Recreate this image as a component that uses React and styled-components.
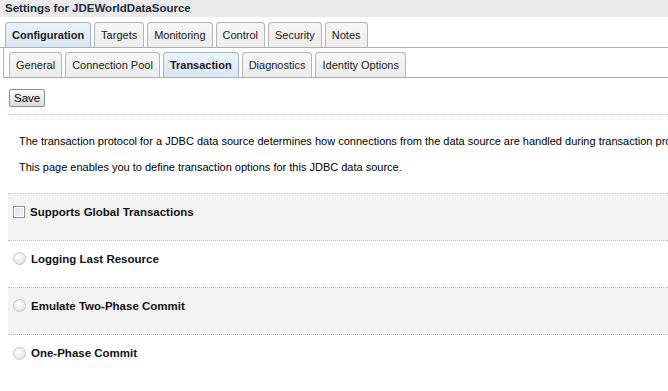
import styled, { createGlobalStyle } from "styled-components";

const GlobalStyle = createGlobalStyle`
  body {
    margin: 0;
    background: #ffffff;
    font-family: "Liberation Sans", Arial, sans-serif;
    font-size: 11px;
    color: #000000;
  }
`;

const topTabs = ["Configuration", "Targets", "Monitoring", "Control", "Security", "Notes"];
const subTabs = ["General", "Connection Pool", "Transaction", "Diagnostics", "Identity Options"];

const options = [
  { label: "Supports Global Transactions", type: "checkbox" },
  { label: "Logging Last Resource", type: "radio" },
  { label: "Emulate Two-Phase Commit", type: "radio" },
  { label: "One-Phase Commit", type: "radio" },
];

const App = () => (
  <Page>
    <GlobalStyle />
    <TitleBar>Settings for JDEWorldDataSource</TitleBar>

    <TabStrip>
      {topTabs.map(tab => (
        <Tab key={tab} selected={tab === "Configuration"}>
          {tab}
        </Tab>
      ))}
    </TabStrip>

    <Panel>
      <SubTabStrip>
        {subTabs.map(tab => (
          <Tab key={tab} selected={tab === "Transaction"}>
            {tab}
          </Tab>
        ))}
      </SubTabStrip>
    </Panel>

    <Toolbar>
      <SaveButton>Save</SaveButton>
    </Toolbar>

    <Intro>
      <p>
        The transaction protocol for a JDBC data source determines how connections from the data
        source are handled during transaction processing.
      </p>
      <p>This page enables you to define transaction options for this JDBC data source.</p>
    </Intro>

    <Options>
      {options.map((option, index) => (
        <OptionRow key={option.label} shaded={index % 2 === 0}>
          {option.type === "checkbox" ? <CheckBox /> : <Radio />}
          <OptionLabel>{option.label}</OptionLabel>
        </OptionRow>
      ))}
    </Options>
  </Page>
);

const Page = styled.div`
  width: 668px;
  height: 391px;
  overflow: hidden;
`;

const TitleBar = styled.div`
  height: 17px;
  line-height: 17px;
  padding-left: 5px;
  background: #eaeaea;
  font-size: 11.5px;
  font-weight: 700;
  color: #1e2b3c;
  white-space: nowrap;
`;

const TabStrip = styled.div`
  display: flex;
  gap: 3px;
  margin-top: 5px;
  padding-left: 5px;
  border-bottom: 1px solid #9db1ca;
`;

const Tab = styled.div`
  height: 24px;
  line-height: 24px;
  padding: 0 6px;
  border: 1px solid ${({ selected }) => (selected ? "#9ab3d1" : "#b4b4b4")};
  border-bottom: none;
  border-radius: 4px 4px 0 0;
  background: ${({ selected }) =>
    selected ? "linear-gradient(#edf3fa, #d9e6f4)" : "linear-gradient(#f6f6f6, #ececec)"};
  font-size: 11px;
  font-weight: ${({ selected }) => (selected ? 700 : 400)};
  color: #1a1a1a;
  white-space: nowrap;
`;

const Panel = styled.div`
  margin-left: 3px;
  border-left: 1px solid #9db1ca;
`;

const SubTabStrip = styled.div`
  display: flex;
  gap: 3px;
  padding: 4px 0 0 5px;
  border-bottom: 1px solid #9db1ca;
`;

const Toolbar = styled.div`
  margin-left: 8px;
  padding: 11px 0 7px 1px;
  border-bottom: 1px dotted #c4bcc4;
  line-height: 0;
`;

const SaveButton = styled.button`
  height: 18px;
  padding: 0 4px;
  border: 1px solid #8c8c8c;
  border-radius: 2px;
  background: linear-gradient(#fbfbfb, #dcdcdc);
  font-family: "Liberation Sans", Arial, sans-serif;
  font-size: 11.5px;
  line-height: 14px;
  color: #000000;
`;

const Intro = styled.div`
  padding: 19px 0 19px 19px;
  white-space: nowrap;

  p {
    margin: 0;
    line-height: 14px;
  }

  p + p {
    margin-top: 12px;
  }
`;

const Options = styled.div`
  margin-left: 8px;
  border-top: 1px dotted #c4bcc4;
`;

const OptionRow = styled.div`
  display: flex;
  align-items: center;
  gap: 5px;
  height: 47px;
  padding: 0 0 11px 5px;
  box-sizing: border-box;
  background: ${({ shaded }) => (shaded ? "#f3f3f3" : "#ffffff")};
  border-bottom: 1px dotted #c4bcc4;

  &:last-child {
    border-bottom: none;
  }
`;

const CheckBox = styled.span`
  width: 10px;
  height: 10px;
  border: 1px solid #8c97a6;
  background: linear-gradient(135deg, #d8dce2, #f4f5f7);
  box-shadow: inset 0 0 0 1px #ffffff;
`;

const Radio = styled.span`
  width: 11px;
  height: 11px;
  border-radius: 50%;
  border: 1px solid #c8c8c8;
  background: radial-gradient(circle at 40% 35%, #ffffff, #dcdcdc);
`;

const OptionLabel = styled.span`
  font-size: 11.5px;
  font-weight: 700;
  color: #111111;
`;

export default App;
